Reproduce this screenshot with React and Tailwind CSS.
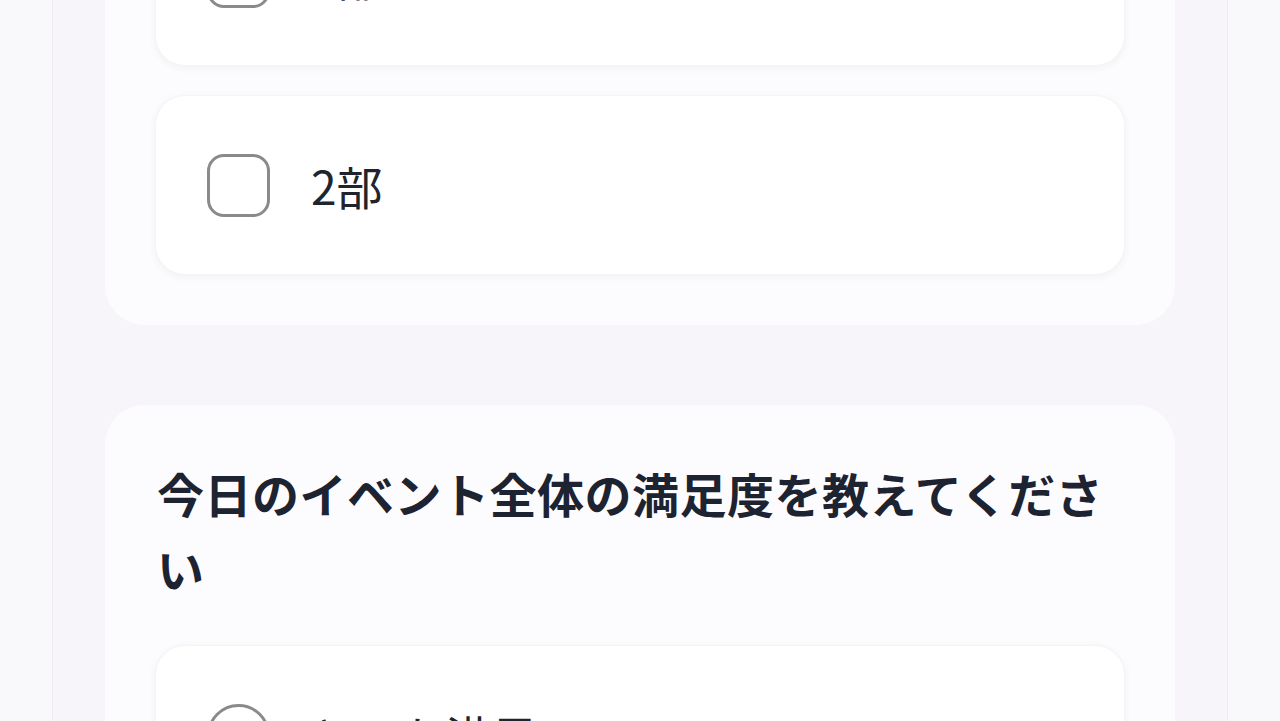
import React from "react";

function OptionCard({ children, type = "check" }) {
  return (
    <div className="h-[180px] rounded-[30px] bg-white shadow-[0_2px_8px_rgba(30,20,60,0.05)] border border-[#f4f3f6] flex items-center pl-[51px] gap-[41px]">
      {type === "check" ? (
        <div className="w-[63px] h-[63px] rounded-[17px] border-[3.5px] border-[#8a8a8a] shrink-0" />
      ) : (
        <div className="w-[63px] h-[63px] rounded-full border-[3.5px] border-[#8a8a8a] shrink-0" />
      )}
      <span className="text-[46px] leading-none text-[#20242c]">{children}</span>
    </div>
  );
}

export default function App() {
  return (
    <div
      className="w-[1280px] h-[721px] overflow-hidden flex bg-[#f9f9fb]"
      style={{ fontFamily: '"Noto Sans CJK JP", "Noto Sans", sans-serif' }}
    >
      <div className="w-[52px] shrink-0" />
      <div className="w-[1176px] shrink-0 border-x border-[#ecebf0] bg-[#f7f4fa] px-[52px]">
        <div className="mt-[-164px] flex flex-col gap-[80px]">
          <div className="rounded-[40px] bg-[#fcfcfe] p-[50px] flex flex-col gap-[29px]">
            <OptionCard>1部</OptionCard>
            <OptionCard>2部</OptionCard>
          </div>
          <div className="rounded-[40px] bg-[#fcfcfe] px-[50px] pt-[50px] pb-[50px] flex flex-col">
            <h2 className="text-[47px] font-bold leading-[75px] text-[#1d2330] tracking-[0.5px] mb-[40px] pl-[2px]">
              今日のイベント全体の満足度を教えてください
            </h2>
            <div className="flex flex-col gap-[29px]">
              <OptionCard type="radio">とても満足</OptionCard>
              <OptionCard type="radio">満足</OptionCard>
            </div>
          </div>
        </div>
      </div>
      <div className="flex-1" />
    </div>
  );
}
